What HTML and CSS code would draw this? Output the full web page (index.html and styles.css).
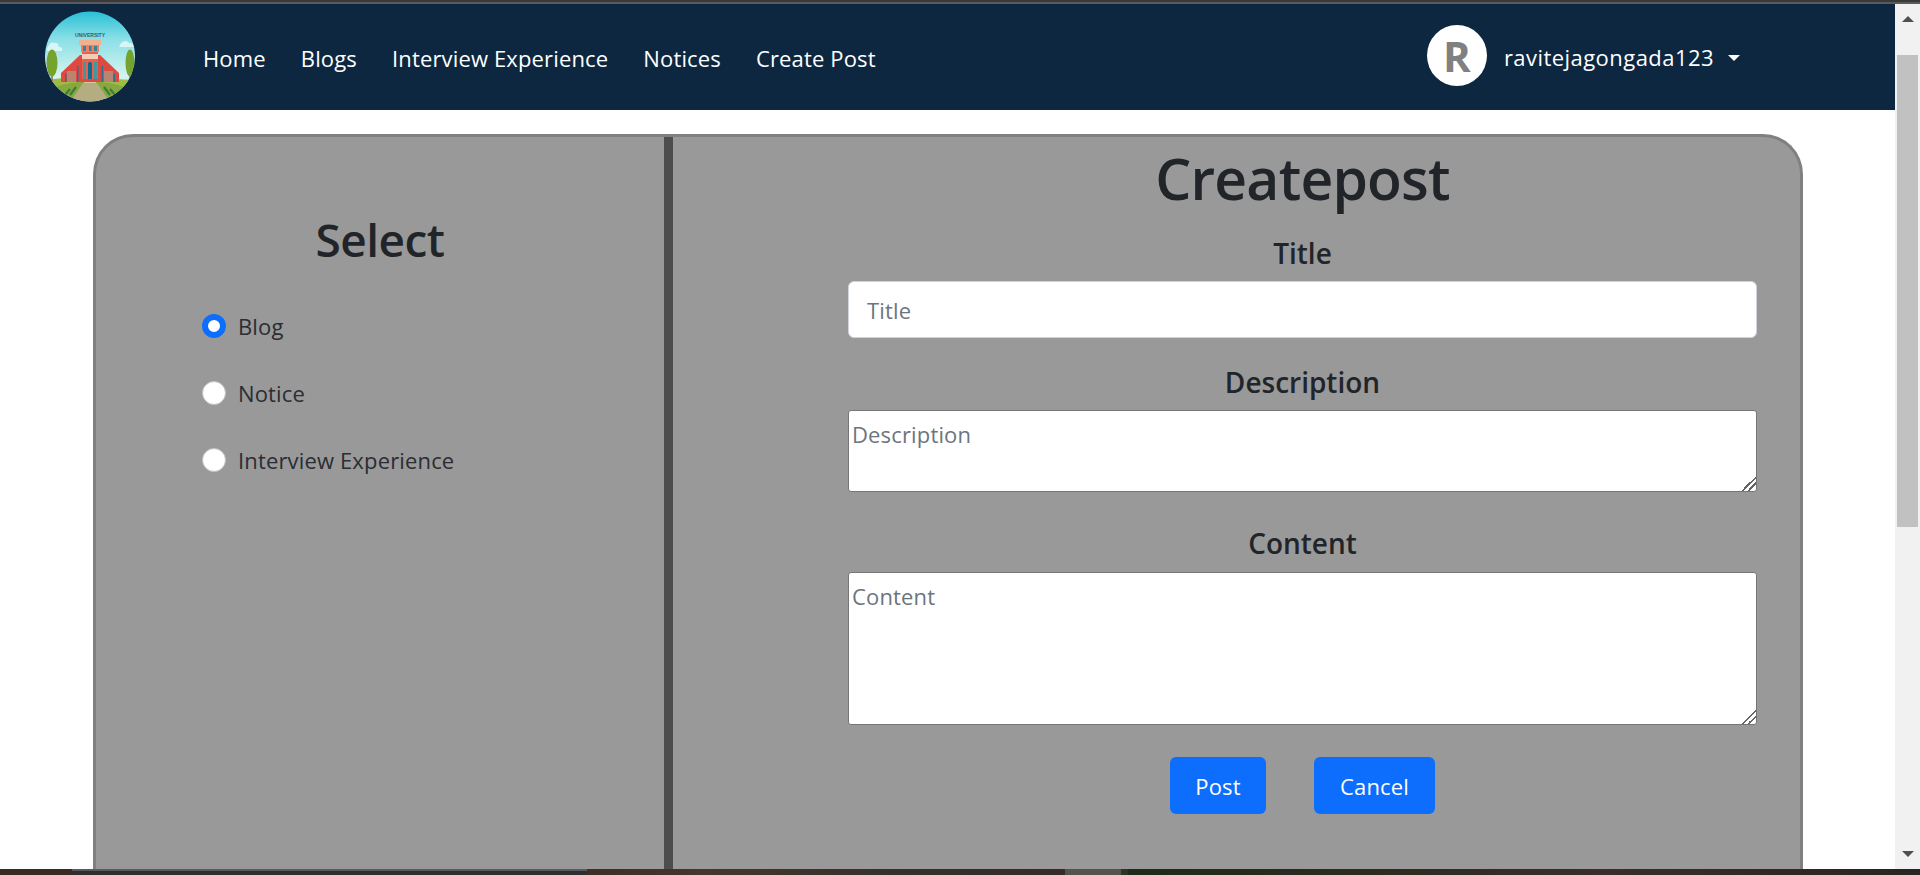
FILE: index.html
```html
<!DOCTYPE html>
<html lang="en">
<head>
<meta charset="utf-8">
<title>Create Post</title>
<link rel="stylesheet" href="styles.css">
</head>
<body>
<div class="screen">
  <div class="window-edge"></div>
  <div class="viewport">
    <div class="page">
      <nav class="navbar">
        <svg class="logo" viewBox="0 0 90 91" aria-label="University logo">
          <defs>
            <linearGradient id="sky" x1="0" y1="0" x2="0" y2="1">
              <stop offset="0" stop-color="#27bfd6"/>
              <stop offset="0.3" stop-color="#88dfe6"/>
              <stop offset="0.7" stop-color="#d2f3ee"/>
            </linearGradient>
            <clipPath id="disc"><circle cx="45" cy="45.5" r="45"/></clipPath>
            <filter id="soft"><feGaussianBlur stdDeviation="0.4"/></filter>
          </defs>
          <g clip-path="url(#disc)">
            <rect width="90" height="91" fill="url(#sky)"/>
            <g filter="url(#soft)">
              <path d="M2 38q3-8 7-6q4-1 5 4q4 0 3 4H2zM76 32q5-4 8 0q5 0 5 4H74z" fill="#e8fafa" opacity=".8"/>
              <path d="M0 69q22-3 45-2t45 2v22H0z" fill="#9dbb45"/>
              <path d="M0 80q18-8 36-9h18q18 1 36 9v11H0z" fill="#86a83e"/>
              <path d="M38 72h14l13 19H25z" fill="#b4ad82"/>
              <path d="M39 68h12v4H39z" fill="#d2c8a2"/>
              <path d="M35 44 16 62v9h58v-9L55 44z" fill="#e04a40"/>
              <path d="M22 60h9v11h-9zM59 60h9v11h-9z" fill="#b98570"/>
              <path d="M20 63h1.500v8H20zM32 55h1.500v16H32zM56.500 55H58v16h-1.500zM68.500 63H70v8h-1.500z" fill="#2f6f93"/>
              <path d="M37 31h16v37H37z" fill="#e8604f"/>
              <path d="M34 29h22v5H34z" fill="#f2b091"/>
              <path d="M36 34h18v7H36z" fill="#ea8168"/>
              <path d="M38 35h3v5h-3zM44 35h2.500v5H44zM49 35h3v5h-3z" fill="#39838f"/>
              <path d="M37 43h16v5H37z" fill="#f6cdb4"/>
              <path d="M43 52q2-2 4 0v16h-4z" fill="#0f6d8c"/>
              <path d="M38 51h3v17h-3zM49 51h3v17h-3z" fill="#3f97a0"/>
              <path d="M7 70V60" stroke="#7a6a3c" stroke-width="1.400"/>
              <ellipse cx="7" cy="52" rx="5.500" ry="13.500" fill="#76a32e"/>
              <path d="M85 70V60" stroke="#7a6a3c" stroke-width="1.400"/>
              <ellipse cx="85" cy="52" rx="4.500" ry="13.500" fill="#76a32e"/>
              <path d="M31 76l-6 8M25 78l-5 6M59 76l6 8M65 78l5 6" stroke="#3e7a3a" stroke-width="2.200"/>
            </g>
            <text class="logo-word" x="45" y="26" text-anchor="middle">UNIVERSITY</text>
          </g>
        </svg>
        <ul class="nav-links">
          <li><a href="#">Home</a></li>
          <li><a href="#">Blogs</a></li>
          <li><a href="#">Interview Experience</a></li>
          <li><a href="#">Notices</a></li>
          <li><a href="#">Create Post</a></li>
        </ul>
        <div class="user">
          <span class="avatar">R</span>
          <span class="username">ravitejagongada123</span>
          <span class="caret"></span>
        </div>
      </nav>
      <main class="card">
        <section class="select-pane">
          <h2 class="select-title">Select</h2>
          <label class="choice"><input type="radio" name="kind" checked><span>Blog</span></label>
          <label class="choice"><input type="radio" name="kind"><span>Notice</span></label>
          <label class="choice"><input type="radio" name="kind"><span>Interview Experience</span></label>
        </section>
        <section class="post-pane">
          <h1 class="post-title">Createpost</h1>
          <form class="post-form">
            <label class="field-label">Title</label>
            <input class="title-input" type="text" placeholder="Title">
            <label class="field-label desc-label">Description</label>
            <textarea class="desc-input" placeholder="Description"></textarea>
            <label class="field-label content-label">Content</label>
            <textarea class="content-input" placeholder="Content"></textarea>
            <div class="actions">
              <button type="button" class="btn btn-post">Post</button>
              <button type="button" class="btn btn-cancel">Cancel</button>
            </div>
          </form>
        </section>
      </main>
    </div>
    <div class="scrollbar">
      <span class="arrow-up"></span>
      <div class="thumb"></div>
      <span class="arrow-down"></span>
    </div>
  </div>
  <div class="taskbar">
    <div class="tb-a"></div>
    <div class="tb-b"></div>
    <div class="tb-c"></div>
    <div class="tb-d"></div>
    <div class="tb-e"></div>
    <div class="tb-f"></div>
  </div>
</div>
</body>
</html>
```
FILE: styles.css
```css
* { box-sizing: border-box; }
html, body { margin: 0; padding: 0; height: 100%; overflow: hidden; }
body { font-family: "Open Sans", "Noto Sans", "Liberation Sans", sans-serif; color: #212529; background: #fff; }

.screen { height: 875px; display: flex; flex-direction: column; overflow: hidden; }
.window-edge { height: 4px; flex: none; background: linear-gradient(#3a3a3a 0 2px, #5a5a5c 2px 4px); }
.viewport { flex: 1; min-height: 0; display: flex; }
.page { flex: 1; min-width: 0; overflow: hidden; background: #fff; }

.navbar { height: 106px; background: #0d2741; display: flex; align-items: center; padding-left: 45px; }
.logo { width: 90px; height: 91px; flex: none; margin-top: -2px; }
.logo-word { font-family: "Liberation Sans", sans-serif; font-size: 5px; font-weight: 700; fill: #3a5a6e; }
.nav-links { list-style: none; margin: 2px 0 0 68px; padding: 0; display: flex; gap: 35px; }
.nav-links a { color: #fff; text-decoration: none; font-size: 22px; letter-spacing: 0.15px; line-height: 30px; display: block; }
.user { margin-left: auto; margin-right: 155px; display: flex; align-items: center; color: #fff; font-size: 22px; }
.avatar { width: 60px; height: 61px; border-radius: 50%; background: #fff; color: #808080; font-size: 42px; font-weight: 700; display: flex; align-items: center; justify-content: center; margin-right: 17px; margin-top: -4px; }
.username { letter-spacing: 0.45px; }
.caret { width: 0; height: 0; border-top: 6.500px solid #fff; border-left: 6.500px solid transparent; border-right: 6.500px solid transparent; margin-left: 14px; margin-top: 2px; }

.card { width: 1710px; height: 760px; margin: 24px 0 0 93px; background: #999; border: 3px solid #808080; border-bottom: 0; border-radius: 40px 40px 0 0; display: flex; }
.select-pane { width: 568px; flex: none; padding: 72px 0 0 106px; }
.select-title { margin: 0 0 43px -106px; text-align: center; font-size: 46px; font-weight: 600; line-height: 60px; letter-spacing: -0.5px; }
.choice { display: flex; align-items: center; gap: 12px; font-size: 22px; letter-spacing: 0.15px; height: 27px; margin-bottom: 40px; color: #2a2d33; }
.choice input { appearance: none; width: 24px; height: 24px; margin: 0; border-radius: 50%; background: #fff; border: 1px solid #c0c0c0; flex: none; }
.choice input:checked { border: 6px solid #0d6efd; background: #fff; }

.post-pane { flex: 1; border-left: 9px solid #4d4d4d; padding: 0 43px 0 175px; text-align: center; }
.post-title { margin: 0; font-size: 57px; font-weight: 600; line-height: 82px; letter-spacing: -0.8px; }
.post-form { display: flex; flex-direction: column; }
.field-label { font-size: 28px; font-weight: 600; line-height: 34px; letter-spacing: 0; }
.post-form > .field-label:first-child { margin-top: 17px; }
.title-input { height: 57px; margin-top: 11px; border: 1px solid #ced4da; border-radius: 6px; padding: 0 18px; font: inherit; font-size: 22px; letter-spacing: 0.15px; background: #fff; outline: none; }
.title-input::placeholder, textarea::placeholder { color: #6c757d; opacity: 1; }
.desc-label { margin-top: 27px; }
.content-label { margin-top: 34px; }
textarea { display: block; font: inherit; font-size: 22px; letter-spacing: 0.15px; padding: 8px 3px 2px; border: 1px solid #767676; border-radius: 3px; background: #fff; outline: none; resize: vertical; margin: 11px 0 0; width: 100%; }
textarea::-webkit-resizer { background: linear-gradient(135deg, transparent 0 50%, #666 50% 58%, transparent 58% 70%, #666 70% 78%, transparent 78%); }
.desc-input { height: 82px; }
.content-input { height: 153px; margin-top: 12px; }
.actions { display: flex; justify-content: center; gap: 48px; margin-top: 32px; }
.btn { height: 57px; border: 0; border-radius: 6px; background: #0d6efd; color: #fff; font: inherit; font-size: 22px; letter-spacing: 0.15px; }
.btn-post { width: 96px; }
.btn-cancel { width: 121px; }

.scrollbar { width: 25px; flex: none; background: #f1f1f1; display: flex; flex-direction: column; align-items: center; }
.thumb { width: 21px; height: 472px; background: #c1c1c1; margin-top: 33px; }
.arrow-up, .arrow-down { width: 0; height: 0; border-left: 6px solid transparent; border-right: 6px solid transparent; }
.arrow-up { border-bottom: 6px solid #505050; margin-top: 12px; }
.arrow-down { border-top: 6px solid #505050; margin-top: auto; margin-bottom: 12px; }

.taskbar { height: 6px; flex: none; display: flex; }
.tb-a { width: 72px; background: #3a2a24; }
.tb-b { width: 515px; background: linear-gradient(#5a5a5c 0 2px, #2e2e2e 2px); }
.tb-c { width: 478px; background: linear-gradient(90deg, #3e2d28, #463530 25%, #33302a 70%, #362b27); }
.tb-d { width: 56px; background: #54544c; }
.tb-e { width: 7px; background: #2e3329; }
.tb-f { flex: 1; background: linear-gradient(90deg, #1f2a1c, #2c2b22 30%, #3a2d2a 60%, #2a2522); }
```
